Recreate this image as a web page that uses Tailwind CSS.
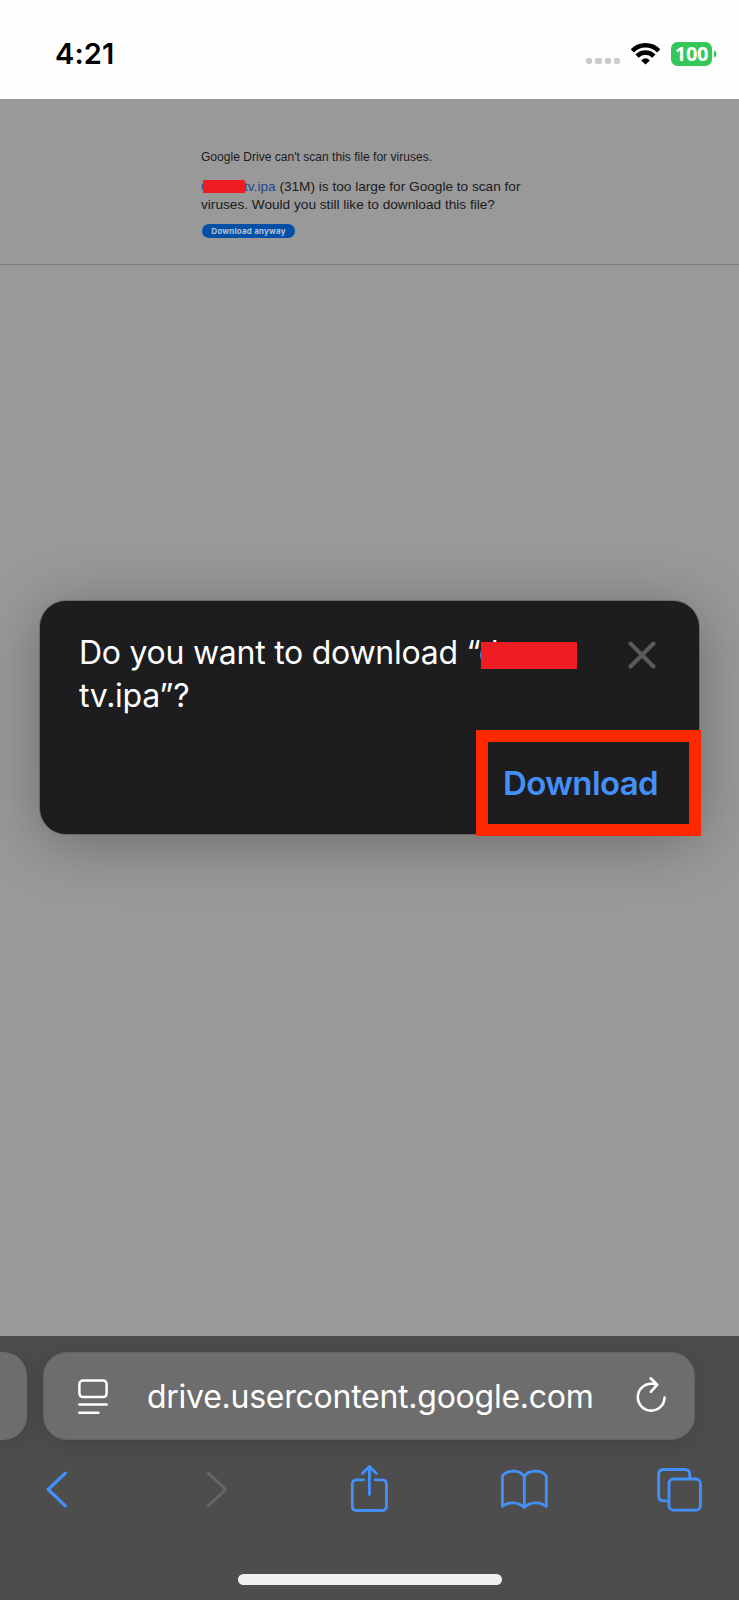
<!DOCTYPE html>
<html lang="en">
<head>
<meta charset="utf-8">
<title>Google Drive – Virus scan warning</title>
<script src="https://cdn.jsdelivr.net/npm/@tailwindcss/browser@4"></script>
</head>
<body class="w-[739px] h-[1600px] overflow-hidden bg-white flex flex-col font-[Inter,sans-serif]">

<!-- Status bar -->
<header class="h-[98.5px] shrink-0 bg-[#fefefe] flex items-start justify-between pl-[55px] pr-[22px]">
  <div class="pt-[37px] text-[29px] leading-[34px] font-semibold text-black tracking-[0.1px]">4:21</div>
  <div class="flex pt-[42px]">
    <div class="flex gap-[3px] pt-[16px]">
      <i class="size-[6.2px] rounded-[2px] bg-[#cbcbcb]"></i><i class="size-[6.2px] rounded-[2px] bg-[#cbcbcb]"></i><i class="size-[6.2px] rounded-[2px] bg-[#cbcbcb]"></i><i class="size-[6.2px] rounded-[2px] bg-[#cbcbcb]"></i>
    </div>
    <svg class="ml-[10px] w-[31px] h-[23px]" viewBox="0 0 31 23" fill="none" stroke="#000" stroke-width="4.5">
      <path d="M2.3 8.8A18.6 18.6 0 0 1 28.7 8.8"/>
      <path d="M7.1 14.1A11.5 11.5 0 0 1 23.9 14.1"/>
      <path d="M11.2 18.4Q15.5 14.2 19.8 18.4L15.5 22.4Z" fill="#000" stroke="none"/>
    </svg>
    <div class="ml-[10px] w-[41px] h-[24px] rounded-[6.5px] bg-[#34c759] text-white text-[20px] leading-[24px] font-bold text-center font-['Open_Sans',sans-serif] tracking-[-0.3px]">100</div>
    <svg class="ml-[2px] mt-[8px] w-[3px] h-[8px]" viewBox="0 0 3 8"><path d="M0 0.5C3.4 1.6 3.4 6.4 0 7.5Z" fill="#34c759"/></svg>
  </div>
</header>

<!-- Dimmed web page -->
<main class="relative h-[1237.5px] shrink-0 bg-[#999] overflow-hidden">
  <section class="h-[166px] border-b border-[#7a7a7a] pl-[201px] pt-[49.5px] font-['Liberation_Sans',sans-serif] text-[#1b1b1b]">
    <p class="text-[12px] leading-[18px] tracking-[0.03px]">Google Drive can't scan this file for viruses.</p>
    <p class="mt-[12px] text-[13.65px] leading-[18px] whitespace-nowrap"><span class="inline-block relative w-[43px] h-[13px] align-[-2px]"><span class="absolute left-0 -top-[1px] leading-[14px] text-[#1e4790]">d</span><span class="absolute left-[2px] top-0 w-[42px] h-[13px] bg-[#ee1d24]"></span></span><span class="text-[#1e4790]">tv.ipa</span> (31M) is too large for Google to scan for<br>viruses. Would you still like to download this file?</p>
    <button class="block mt-[10px] ml-[1px] w-[93px] h-[14px] rounded-full bg-[#0450a6] text-[#b3c3da] text-[8px] leading-[14px] font-bold font-[Inter,sans-serif] tracking-[0.2px] whitespace-nowrap">Download anyway</button>
  </section>

  <!-- Download prompt -->
  <div class="absolute left-[40px] top-[502.5px] w-[659px] h-[233px] rounded-[26px] bg-[#1d1d1f] shadow-[0_8px_60px_rgba(0,0,0,0.3),0_0_0_1px_rgba(75,75,77,0.4)] flex justify-between pl-[39px] pr-[43px] pt-[30px]">
    <p class="text-white text-[32px] leading-[43px] tracking-[-0.26px] whitespace-nowrap">Do you want to download “<span class="relative">d<span class="absolute left-[2px] top-[9px] w-[96px] h-[27px] bg-[#ee1d24]"></span></span><br>tv.ipa”?</p>
    <svg class="mt-[10px] w-[28px] h-[28px]" viewBox="0 0 28 28" fill="none" stroke="#5b5b5e" stroke-width="4" stroke-linecap="round"><path d="M2.5 2.5 25.5 25.5M25.5 2.5 2.5 25.5"/></svg>
    <button class="absolute left-[435.5px] top-[128.5px] w-[225.5px] h-[106px] border-[12px] border-[#ff2800] text-[#4490fb] font-semibold text-[33px] leading-[82px] pl-[15.5px] text-left tracking-[-0.6px]">Download</button>
  </div>
</main>

<!-- Browser controls -->
<footer class="h-[264px] shrink-0 bg-[#4d4d4d] overflow-hidden">
  <div class="flex gap-[16px] pt-[16px]">
    <div class="w-[27.4px] h-[88px] rounded-r-[24px] bg-[#6d6d6d] shadow-[0_3px_24px_rgba(0,0,0,0.15)]"></div>
    <div class="w-[652px] h-[88px] rounded-[24px] bg-[#6d6d6d] border border-[#656565] shadow-[0_3px_24px_rgba(0,0,0,0.15)] flex items-start pl-[33.5px]">
      <svg class="mt-[26px] w-[30px] h-[36px]" viewBox="0 0 30 36" fill="none" stroke="#fff" stroke-width="2.5" stroke-linecap="round"><rect x="1.4" y="1.5" width="27.2" height="16.6" rx="3.5"/><path d="M1.3 25.5H28.7M1.3 33.7H20.5"/></svg>
      <p class="ml-[39px] mt-[22px] w-[448px] text-[32px] leading-[44px] text-white tracking-[-0.25px] whitespace-nowrap">drive.usercontent.google.com</p>
      <svg class="ml-[41.5px] mt-[23px] w-[30px] h-[37px]" viewBox="0 0 30 37" fill="none" stroke="#fff" stroke-width="2.6" stroke-linecap="round" stroke-linejoin="round"><path d="M20.3 8.6C18.9 8 17 7.8 15.2 7.8A13.4 13.4 0 1 0 28.6 21.5M14.6 2.3 21.3 8.7 14.8 15.8"/></svg>
    </div>
  </div>
  <nav class="flex mt-[24px] pl-[46px] text-[#4490fb]">
    <svg class="w-[22px] h-[50px]" viewBox="46 1464 22 50" fill="none" stroke="currentColor" stroke-width="3.2" stroke-linecap="round" stroke-linejoin="round"><path d="M65.3 1473.2 48.2 1489.5 65.3 1505.8"/></svg>
    <svg class="ml-[138px] w-[22px] h-[50px]" viewBox="206 1464 22 50" fill="none" stroke="#666" stroke-width="3" stroke-linecap="round" stroke-linejoin="round"><path d="M208.3 1473.2 225.6 1489.5 208.3 1505.8"/></svg>
    <svg class="ml-[122px] w-[39px] h-[50px]" viewBox="350 1464 39 50" fill="none" stroke="currentColor" stroke-width="2.8" stroke-linecap="round" stroke-linejoin="round"><path d="M363.5 1479.8H356.5Q352.3 1479.8 352.3 1484V1506.3Q352.3 1510.5 356.5 1510.5H382.2Q386.4 1510.5 386.4 1506.3V1484Q386.4 1479.8 382.2 1479.8H375.2M369.4 1494.5V1467M362.4 1473.5 369.4 1466.5 376.4 1473.5"/></svg>
    <svg class="ml-[111px] w-[49px] h-[50px]" viewBox="500 1464 49 50" fill="none" stroke="currentColor" stroke-width="2.8" stroke-linecap="round" stroke-linejoin="round"><path d="M524.3 1476.5C520 1469.8 507.5 1469.2 502.4 1476V1506.5C508 1501.6 518 1501.3 524.3 1507.5C530.6 1501.3 540.5 1501.6 546.3 1506.5V1476C541.2 1469.2 528.6 1469.8 524.3 1476.5V1507"/></svg>
    <svg class="ml-[107px] w-[47px] h-[50px]" viewBox="656 1464 47 50" fill="none" stroke="currentColor" stroke-width="2.8" stroke-linejoin="round"><path d="M667.5 1500.8H663.4Q658.7 1500.8 658.7 1496V1474.3Q658.7 1469.5 663.4 1469.5H685Q689.7 1469.5 689.7 1474.3V1478.5"/><rect x="669" y="1479" width="31.4" height="31.2" rx="4.5"/></svg>
  </nav>
  <div class="mx-auto mt-[60px] w-[264px] h-[11px] rounded-full bg-[#efefef]"></div>
</footer>
</body>
</html>
